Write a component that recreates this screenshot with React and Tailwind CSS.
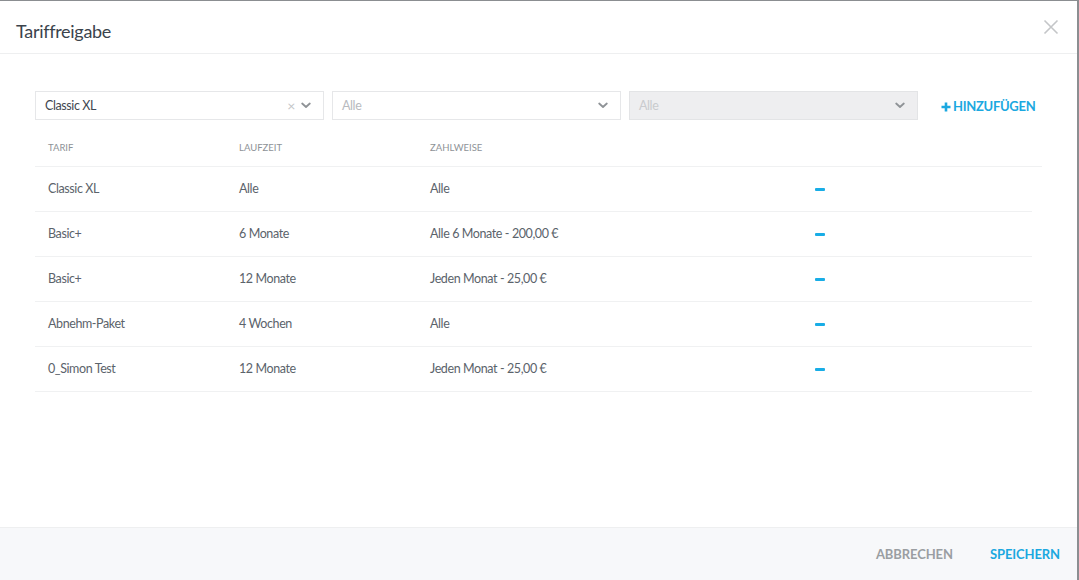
import React from 'react';

const rows = [
  { tarif: 'Classic XL', laufzeit: 'Alle', zahlweise: 'Alle' },
  { tarif: 'Basic+', laufzeit: '6 Monate', zahlweise: 'Alle 6 Monate - 200,00 €' },
  { tarif: 'Basic+', laufzeit: '12 Monate', zahlweise: 'Jeden Monat - 25,00 €' },
  { tarif: 'Abnehm-Paket', laufzeit: '4 Wochen', zahlweise: 'Alle' },
  { tarif: '0_Simon Test', laufzeit: '12 Monate', zahlweise: 'Jeden Monat - 25,00 €' },
];

const Chevron = ({ className }) => (
  <svg className={className} width="10" height="7" viewBox="0 0 10 7" fill="none">
    <path d="M1.2 1.5 L5 5 L8.8 1.5" stroke="currentColor" strokeWidth="1.8" strokeLinecap="round" strokeLinejoin="round" />
  </svg>
);

const Select = ({ value, placeholder, clearable, disabled }) => (
  <div
    className={`flex h-[29px] w-[289px] items-center border pl-[9px] pr-[12px] text-[12.5px] tracking-[-0.4px] ${
      disabled ? 'border-[#e3e4e6] bg-[#eeeef0]' : 'border-[#e6e7e9] bg-white'
    }`}
  >
    <span className={`flex-1 pt-[2px] ${value ? 'text-[#3f4750]' : disabled ? 'text-[#c9cbce]' : 'text-[#b7babe]'}`}>
      {value || placeholder}
    </span>
    {clearable && <span className="mr-[6px] text-[14px] leading-none text-[#c3c5c8]">×</span>}
    <Chevron className="text-[#8f9397]" />
  </div>
);

const App = () => {
  return (
    <div className="h-[580px] w-[1079px] bg-[#8b8e91] pt-px pr-[2px]" style={{ fontFamily: 'Lato, "Open Sans", sans-serif' }}>
      <div className="flex h-[579px] flex-col bg-white">
        <header className="flex h-[53px] shrink-0 items-center justify-between border-b border-[#eeeff0] pl-[16px] pr-[18px]">
          <h1 className="pt-[8px] text-[18px] tracking-[-0.3px] text-[#3b434c]">Tariffreigabe</h1>
          <svg width="16" height="16" viewBox="0 0 16 16" className="text-[#c4c6c8]">
            <path d="M1.5 1.5 L14.5 14.5 M14.5 1.5 L1.5 14.5" stroke="currentColor" strokeWidth="1.6" />
          </svg>
        </header>

        <main className="flex-1 pl-[35px] pr-[36px] pt-[37px]">
          <div className="flex items-center">
            <div className="flex gap-[8px]">
              <Select value="Classic XL" clearable />
              <Select placeholder="Alle" />
              <Select placeholder="Alle" disabled />
            </div>
            <button className="ml-[23px] mt-[2px] flex items-center gap-[2px] text-[13px] font-bold tracking-[-0.3px] text-[#1ba8e0]">
              <svg width="10" height="10" viewBox="0 0 10 10">
                <path d="M5 0.5 V9.5 M0.5 5 H9.5" stroke="currentColor" strokeWidth="2.6" />
              </svg>
              HINZUFÜGEN
            </button>
          </div>

          <div className="mt-[9px] w-[1007px] text-[12.5px] tracking-[-0.4px] text-[#5b636b]">
            <div className="grid h-[38px] grid-cols-[191px_191px_191px_1fr] items-center border-b border-[#f0f1f2] pl-[13px] pt-[2px] text-[9.5px] uppercase tracking-[0px] text-[#8e9297]">
              <span>Tarif</span>
              <span>Laufzeit</span>
              <span>Zahlweise</span>
              <span></span>
            </div>
            {rows.map((r, i) => (
              <div
                key={i}
                className="grid h-[45px] w-[997px] grid-cols-[191px_191px_191px_1fr] items-center border-b border-[#f0f1f2] pl-[13px]"
              >
                <span>{r.tarif}</span>
                <span>{r.laufzeit}</span>
                <span>{r.zahlweise}</span>
                <span className="pl-[194px]">
                  <span className="block h-[3px] w-[10px] rounded-[1px] bg-[#19ade6]"></span>
                </span>
              </div>
            ))}
          </div>
        </main>

        <footer className="flex h-[53px] shrink-0 items-center justify-end gap-[37px] border-t border-[#eeeff0] bg-[#f7f8fa] pr-[17px] text-[13px] font-bold tracking-[-0.1px]">
          <button className="mt-[2px] text-[#9a9ea2]">ABBRECHEN</button>
          <button className="mt-[2px] text-[#1ba8e0]">SPEICHERN</button>
        </footer>
      </div>
    </div>
  );
};

export default App;
